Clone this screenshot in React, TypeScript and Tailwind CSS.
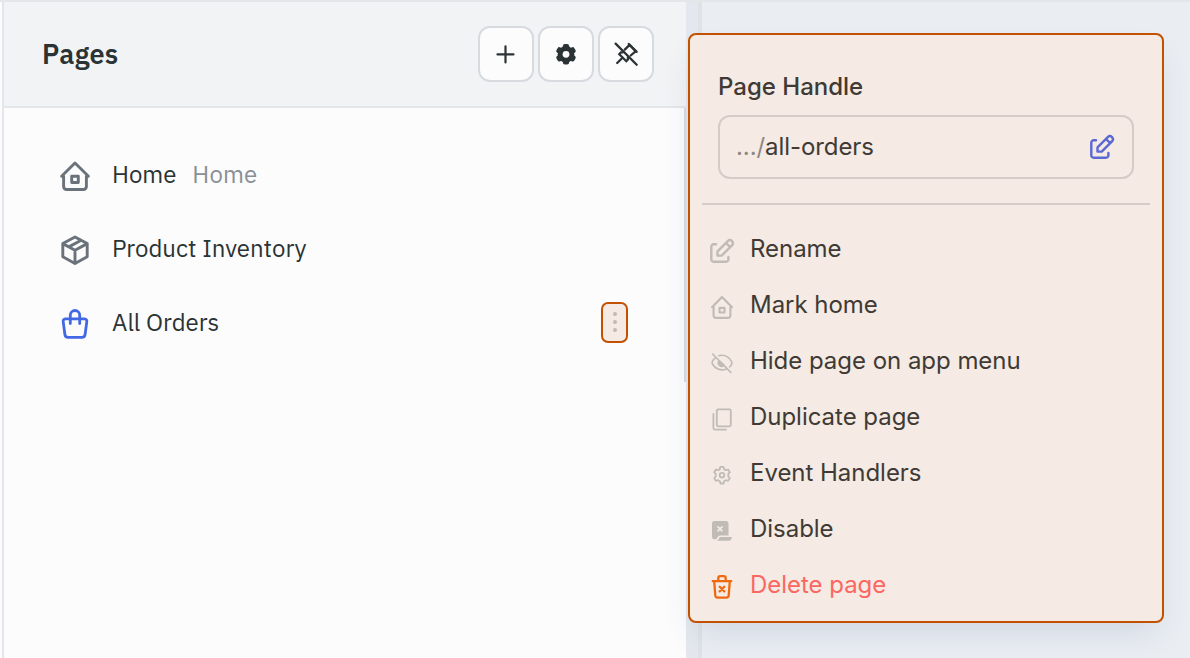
import type { ReactNode } from "react";

type IconProps = { className?: string };

function Svg({ className = "", sw = 2, box = 32, children }: { className?: string; sw?: number; box?: number; children: ReactNode }) {
  return (
    <svg
      width={box}
      height={box}
      viewBox={`0 0 ${box} ${box}`}
      fill="none"
      stroke="currentColor"
      strokeWidth={sw}
      strokeLinecap="round"
      strokeLinejoin="round"
      className={`block shrink-0 ${className}`}
    >
      {children}
    </svg>
  );
}

const HomeLarge = () => (
  <Svg sw={2.9} className="text-[#6a727c]">
    <path d="M2.6 16.2H4.6V26.600a2.900 2.900 0 0 0 2.900 2.900H24.500a2.900 2.900 0 0 0 2.900-2.900V16.200H29.400L16 3Z" />
    <path d="M12.7 16.200h6.600v6.300h-6.600z" />
  </Svg>
);

const Package = () => (
  <Svg sw={2.9} className="text-[#6a727c]">
    <path d="M16 2.900 28.200 9.600v13.200L16 29.500 3.800 22.800V9.600ZM16 16.200 28.200 9.600M16 16.200v13.300M16 16.200 3.800 9.600M22.200 6.200 9.800 12.900" />
  </Svg>
);

const Bag = () => (
  <Svg sw={2.8} className="text-[#4368e3]">
    <path d="M6.400 10.800H25.600a2.400 2.400 0 0 1 2.200 2.800l-1.700 12.900a3.200 3.200 0 0 1-3.200 2.800H9.100a3.200 3.200 0 0 1-3.200-2.800L4.200 13.600a2.400 2.400 0 0 1 2.200-2.800Z" />
    <path d="M11.300 15.500V7.200a4.700 4.700 0 0 1 9.400 0v8.300" />
  </Svg>
);

const Edit = ({ className = "" }: IconProps) => (
  <Svg sw={2.4} box={26} className={className}>
    <path d="M7 6.300H4.600A2.300 2.300 0 0 0 2.300 8.600V21.400a2.300 2.300 0 0 0 2.300 2.300H17.100a2.300 2.300 0 0 0 2.300-2.300V19" />
    <path d="M8.500 13.400V17.600h4.200L23 7.300a2.970 2.970 0 0 0-4.200-4.200ZM17 5l4.200 4.200" />
  </Svg>
);

const HomeSmall = () => (
  <Svg sw={2.1} box={26}>
    <path d="M3 13.300H4.600V21.600a2.300 2.300 0 0 0 2.300 2.300H19.100a2.300 2.300 0 0 0 2.300-2.300V13.300H23L13 3Z" />
    <path d="M10.500 13.900h5v4.600h-5z" />
  </Svg>
);

const EyeOff = () => (
  <Svg sw={1.6} box={26}>
    <path d="M3.600 4 21.800 22.400M10 5.600c5.700-1.200 10 1.300 12.600 6 .5 1 .5 1.700 0 2.700q-.8 1.500-2 2.700M17 19.200c-5.800 1.900-11-.6-13.600-5.200-.5-1-.5-1.700 0-2.700q1-1.900 2.700-3.200" />
    <path d="M10.200 10.800a3.200 3.200 0 0 0 4.800 4.400Z" fill="currentColor" />
  </Svg>
);

const Copy = () => (
  <Svg sw={1.8} box={26}>
    <rect x="7.800" y="3.300" width="14" height="17" rx="1.500" />
    <path d="M4.400 8v14.100a1.500 1.500 0 0 0 1.500 1.500H17" />
  </Svg>
);

const HexGear = () => (
  <Svg sw={1.8} box={26}>
    <path d="M10.900 5.900 11.500 4.900h3l.6 2.300 1.700 1 2.300-.7 1.700 2.800-1.500 1.600v2.600l1.500 1.600-1.700 2.800-2.300-.7-1.700 1-.6 2.300h-3l-.6-2.300-1.700-1-2.300.7-1.700-2.800 1.500-1.600v-2.600L5.200 10.300l1.700-2.800 2.300.7 1.700-1Z" />
    <circle cx="13" cy="13.200" r="2.300" />
  </Svg>
);

const Disable = () => (
  <svg width="26" height="26" viewBox="0 0 26 26" className="block shrink-0">
    <path
      fill="currentColor"
      d="M5.500 3H17a2.500 2.500 0 0 1 2.500 2.500V17.400H11.500c-2.500 0-2.700 1.600-3.300 2.700-.6 1-1.600 1.300-2.700 1.300A2.700 2.700 0 0 1 3 18.700V5.500A2.500 2.500 0 0 1 5.500 3Z"
    />
    <path fill="currentColor" d="M11.800 19.100H22.700c0 2.300-1 3.700-2.900 3.700H7.600c1.700-.5 2.200-1.700 2.700-2.800.3-.7.700-.9 1.500-.9Z" />
    <path d="M8.500 8.300 13.500 13.300M13.500 8.300 8.500 13.300" stroke="#f5eae4" strokeWidth="1.700" />
  </svg>
);

const Trash = () => (
  <Svg sw={2.3} box={26} className="text-[#f0690f]">
    <path d="M3.700 7.200H22.300M5.200 7.200 6.300 21.500a2.300 2.300 0 0 0 2.300 2.100h8.800a2.300 2.300 0 0 0 2.300-2.100L20.800 7.200M9.300 7V4.200a2 2 0 0 1 2-2h3.400a2 2 0 0 1 2 2V7M10.700 12.800l4.600 4.600M15.300 12.800l-4.600 4.600" />
  </Svg>
);

const Plus = () => (
  <Svg sw={2.2} className="text-[#2b3334]">
    <path d="M7.500 16.400H23.500M15.500 8.400V24.400" />
  </Svg>
);

const GEAR_ANGLES = [0, 60, 120, 180, 240, 300];

const SolidGear = () => (
  <svg width="32" height="32" viewBox="0 0 32 32" className="block text-[#2b3334]">
    <circle cx="16" cy="16.300" r="8.300" fill="currentColor" />
    {GEAR_ANGLES.map((a) => (
      <rect key={a} x="12.900" y="6" width="6.200" height="6" rx="2" fill="currentColor" transform={`rotate(${a} 16 16.300)`} />
    ))}
    <circle cx="16" cy="16.300" r="3.400" fill="#fcfcfd" />
  </svg>
);

const PinOff = () => (
  <Svg sw={2.3} className="text-[#2b3334]">
    <path d="M5.600 5.600 26.700 26.700M7.200 25 12.500 19.700" />
    <path d="M12.600 14.400H10.900L9.300 16.200 16.300 23.200 17.900 21.600V19.500M14.800 11.600 19.600 6.900 25.800 13.100 20.700 17.500" strokeLinejoin="miter" />
    <path d="M18.700 6 26.600 13.900" />
  </Svg>
);

const headerButtons = [
  { name: "add", icon: <Plus /> },
  { name: "settings", icon: <SolidGear /> },
  { name: "unpin", icon: <PinOff /> },
];

const menuItems = [
  { label: "Rename", icon: <Edit /> },
  { label: "Mark home", icon: <HomeSmall /> },
  { label: "Hide page on app menu", icon: <EyeOff /> },
  { label: "Duplicate page", icon: <Copy /> },
  { label: "Event Handlers", icon: <HexGear /> },
  { label: "Disable", icon: <Disable /> },
  { label: "Delete page", icon: <Trash /> },
];

function PageRow({ icon, children }: { icon: ReactNode; children: ReactNode }) {
  return (
    <div className="flex h-[74px] items-center pl-[55px] pr-[56px] text-[24px] leading-8 text-[#2b3334]">
      <span className="mt-[3px]">{icon}</span>
      {children}
    </div>
  );
}

export default function App() {
  return (
    <div className="relative flex h-[658px] w-[1190px] overflow-hidden border-t-2 border-[#e4e7e9] bg-[#eaeef3] font-['IBM_Plex_Sans','Noto_Sans',sans-serif]">
      <div className="w-[4px] shrink-0 border-r-2 border-[#e3e7eb] bg-[#fcfcfd]" />
      <aside className="flex w-[682px] shrink-0 flex-col bg-[#fcfcfd]">
        <header className="flex h-[106px] shrink-0 items-center justify-between border-b-2 border-[#e3e7ea] bg-[#f1f3f5] pl-[38px] pr-[32px]">
          <h1 className="text-[27px] leading-8 font-semibold tracking-[0.3px] text-[#2b3334]">Pages</h1>
          <div className="flex gap-1">
            {headerButtons.map((b) => (
              <button key={b.name} aria-label={b.name} className="flex size-14 items-center justify-center rounded-[12px] border-2 border-[#d7dbdf] bg-[#fcfcfd]">
                {b.icon}
              </button>
            ))}
          </div>
        </header>
        <div className="flex grow">
          <div className="grow pt-[29px]">
            <PageRow icon={<HomeLarge />}>
              <span className="ml-[21px] tracking-[-0.05px]">Home</span>
              <span className="ml-[16px] tracking-[0.1px] text-[#889096]">Home</span>
            </PageRow>
            <PageRow icon={<Package />}>
              <span className="ml-[21px]">Product Inventory</span>
            </PageRow>
            <PageRow icon={<Bag />}>
              <span className="ml-[21px] grow">All Orders</span>
              <button aria-label="Page options" className="flex h-[41px] w-[27px] flex-col items-center justify-center gap-1 rounded-[7px] border-2 border-[#c25202] bg-[#f5eae4]">
                <i className="size-1 rounded-full bg-[#c0bbb5]" />
                <i className="size-1 rounded-full bg-[#c0bbb5]" />
                <i className="size-1 rounded-full bg-[#c0bbb5]" />
              </button>
            </PageRow>
          </div>
          <div className="h-[274px] w-[2px] shrink-0 bg-[#d7dce1]" />
        </div>
      </aside>
      <div className="w-[16px] shrink-0 border-r-4 border-[#dfe3e6] bg-[#e4e8ee]" />

      <section className="absolute top-[31px] left-[688px] flex h-[590px] w-[476px] flex-col rounded-[8px] border-2 border-[#c25202] bg-[#f5eae4] font-[Inter,sans-serif] text-[#403a35] shadow-[0_16px_32px_-8px_rgba(50,70,110,0.14)]">
        <div className="px-7 pt-[36px]">
          <h2 className="text-[24px] leading-8 font-medium">Page Handle</h2>
          <div className="mt-[12px] flex h-16 items-center justify-between rounded-[12px] border-2 border-[#d5cbc7] pr-[17px] pl-[16px] text-[24px] tracking-[-0.08px]">
            <span>
              <span className="text-[#8d8781]">.../</span>all-orders
            </span>
            <Edit className="text-[#5b69d3]" />
          </div>
        </div>
        <hr className="mx-3 mt-[24px] border-t-2 border-[#d5cbc7]" />
        <ul className="mt-[16px] pl-[19px]">
          {menuItems.map((m) => (
            <li key={m.label} className="flex h-14 items-center text-[24px] leading-8 tracking-[-0.03px]">
              <span className="mt-[3px] text-[#c0bbb5]">{m.icon}</span>
              <span className={`ml-[15px] ${m.label === "Delete page" ? "text-[#fb6761]" : ""}`}>{m.label}</span>
            </li>
          ))}
        </ul>
      </section>
    </div>
  );
}
